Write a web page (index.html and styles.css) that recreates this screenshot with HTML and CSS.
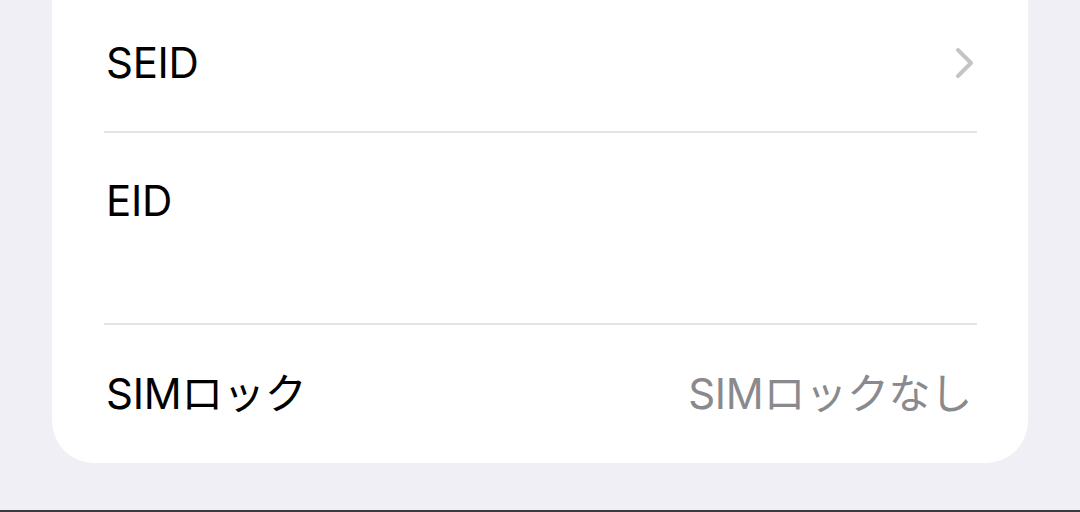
FILE: index.html
```html
<!DOCTYPE html>
<html lang="ja">
<head>
    <meta charset="UTF-8">
    <meta name="viewport" content="width=device-width, initial-scale=1.0">
    <title>情報</title>
    <link rel="stylesheet" href="styles.css">
</head>
<body>
    <div class="screen">
        <div class="group">
            <div class="row row-seid">
                <span class="label">SEID</span>
                <svg class="chevron" width="22" height="34" viewBox="0 0 22 34">
                    <path d="M4 4 L17 17 L4 30" fill="none" stroke="#c4c4c7" stroke-width="4" stroke-linecap="round" stroke-linejoin="round"/>
                </svg>
            </div>
            <div class="sep"></div>
            <div class="row row-eid">
                <span class="label">EID</span>
                <span class="hidden-value"></span>
            </div>
            <div class="sep"></div>
            <div class="row row-sim">
                <span class="label">SIMロック</span>
                <span class="value">SIMロックなし</span>
            </div>
        </div>
    </div>
    <div class="bottom-line"></div>
</body>
</html>
```

FILE: styles.css
```css
html, body {
    margin: 0;
    padding: 0;
}
body {
    width: 1080px;
    height: 512px;
    overflow: hidden;
    background-color: #f0eff5;
    font-family: Inter, "Noto Sans CJK JP", sans-serif;
    display: flex;
    flex-direction: column;
}
.screen {
    flex: 1;
    padding: 0 52px;
}
.group {
    margin-top: -5px;
    background-color: #fff;
    border-radius: 0 0 42px 42px;
    padding: 0 52px 0 54px;
}
.row {
    display: flex;
    align-items: center;
    justify-content: space-between;
}
.row-seid {
    height: 136px;
}
.row-eid {
    height: 190px;
    flex-direction: column;
    align-items: flex-start;
    justify-content: flex-start;
}
.row-eid .label {
    margin-top: 47px;
}
.hidden-value {
    display: block;
    height: 44px;
    margin-top: 14px;
}
.row-sim {
    height: 138px;
}
.label {
    font-size: 42px;
    color: #000;
    letter-spacing: -0.3px;
    line-height: 42px;
}
.value {
    font-size: 42px;
    color: #8a8a8e;
    letter-spacing: -0.3px;
    line-height: 42px;
    margin-right: 4px;
}
.chevron {
    margin-right: 0;
}
.sep {
    height: 2px;
    background-color: #e4e4e6;
    margin-left: -2px;
    margin-right: -1px;
}
.bottom-line {
    height: 2px;
    background-color: #3a3a3c;
}
```
